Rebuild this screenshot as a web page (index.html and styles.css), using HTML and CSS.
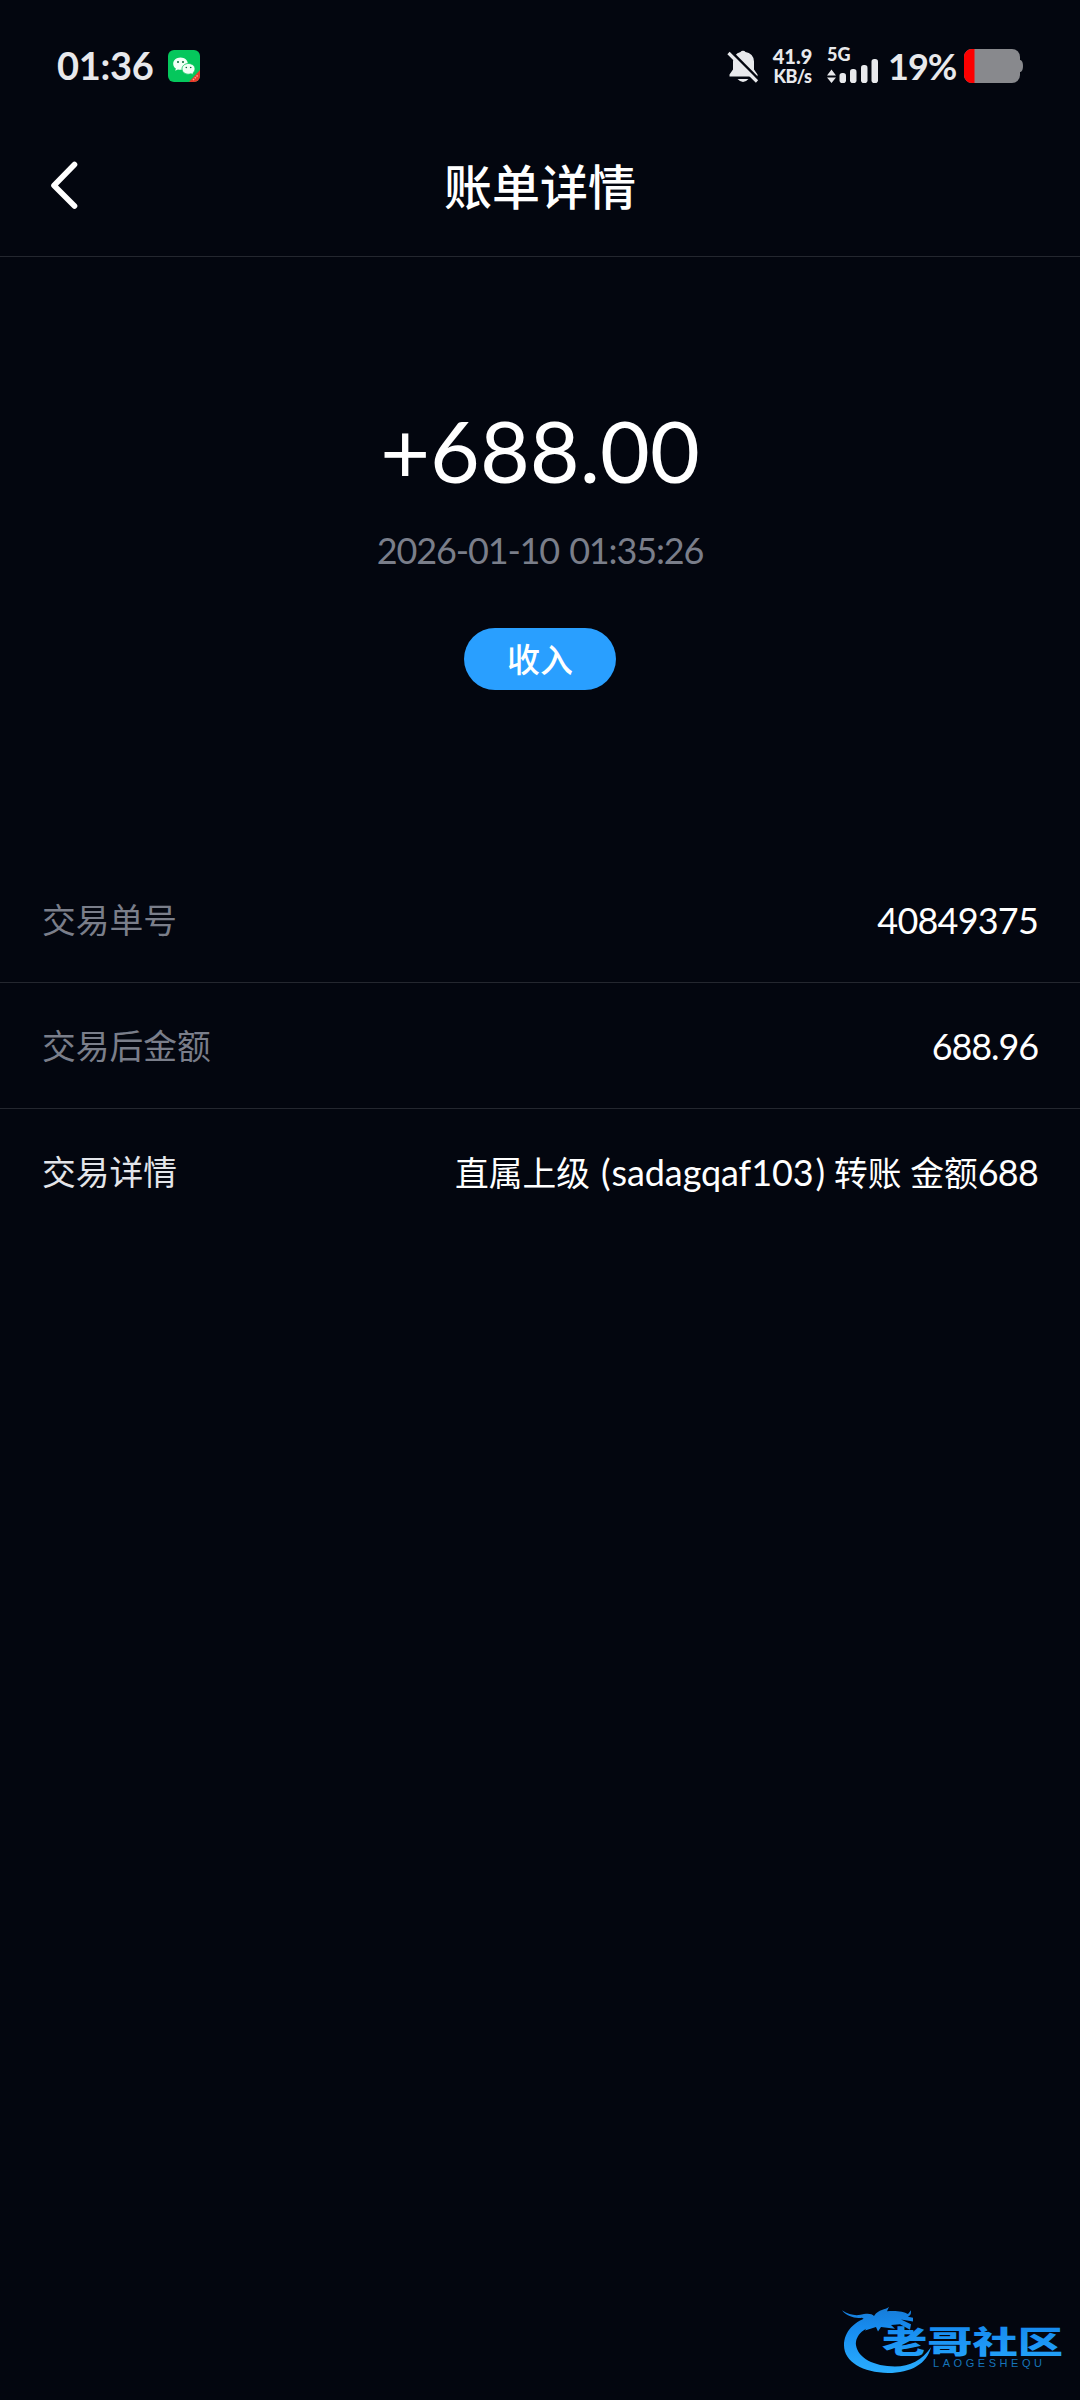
FILE: index.html
```html
<!DOCTYPE html>
<html lang="zh-CN">
<head>
<meta charset="utf-8">
<title>账单详情</title>
<link rel="stylesheet" href="styles.css">
</head>
<body>
<div class="status-bar">
  <span class="clock">01:36</span>
  <svg class="wechat" viewBox="0 0 32 32" width="32" height="32">
    <clipPath id="app"><rect width="32" height="32" rx="6"/></clipPath>
    <g clip-path="url(#app)">
      <rect width="32" height="32" fill="#05c75c"/>
      <path d="M32 20V32H21Z" fill="#e8392b"/>
      <path d="M25 30l5-5" stroke="#ff9c8c" stroke-width="1.5" stroke-dasharray="1.5 1"/>
    </g>
    <path d="M12.500 7.500c-4.200 0-7.300 2.800-7.300 6.200 0 2 1 3.700 2.700 4.900l-.7 2.200 2.700-1.300c.9.200 1.700.3 2.600.3 4.200 0 7.300-2.700 7.300-6.100s-3.100-6.200-7.300-6.200z" fill="#f2fff6"/>
    <path d="M20.500 13.500c3.700 0 6.500 2.400 6.500 5.400 0 1.600-.8 3-2.100 4l.5 2-2.300-1.100c-.8.200-1.700.4-2.600.4-3.700 0-6.500-2.300-6.500-5.300s2.800-5.400 6.500-5.400z" fill="#f2fff6" stroke="#05c75c" stroke-width=".8"/>
    <g fill="#076b38"><circle cx="10" cy="12" r="1"/><circle cx="15" cy="12" r="1"/><circle cx="18.300" cy="17.500" r=".8"/><circle cx="22.700" cy="17.500" r=".8"/></g>
  </svg>
  <div class="indicators">
    <svg class="bell" viewBox="0 0 32 36" width="32" height="36">
      <path d="M2.500 28.500V26.500L6 21.500v-8a9.500 9.500 0 0 1 7.500-9.500 3 3 0 0 1 5 0 9.500 9.500 0 0 1 8.500 9.500v8l3.500 5v2z" fill="#e8e9ec"/>
      <path d="M10.500 31h11q-5.500 6-11 0z" fill="#e8e9ec"/>
      <path d="M4 3.500L32.500 32" stroke="#03060f" stroke-width="2.600"/>
      <path d="M1.500 5L30 33.500" stroke="#e8e9ec" stroke-width="3.200"/>
    </svg>
    <div class="speed"><span class="rate">41.9</span><span class="unit">KB/s</span></div>
    <div class="cell">
      <span class="network">5G</span>
      <svg viewBox="0 0 52 24" width="52" height="24" fill="#e8e9ec">
        <path d="M4.500 10.500L9 16.500H0zM4.500 24L0 18.500H9z"/>
        <rect x="12.500" y="14" width="6.500" height="10" rx="2.800"/><rect x="23" y="10" width="6.500" height="14" rx="2.800"/><rect x="34" y="6" width="6.500" height="18" rx="2.800"/><rect x="44.500" y="0" width="6.500" height="24" rx="2.800"/>
      </svg>
    </div>
    <span class="percent">19%</span>
    <svg class="battery" viewBox="0 0 60 34" width="60" height="34">
      <clipPath id="cell"><rect width="56" height="34" rx="8"/></clipPath>
      <path d="M55 11h1.500q2.500 1 2.500 6t-2.500 6H55z" fill="#88898d"/>
      <g clip-path="url(#cell)"><rect width="56" height="34" fill="#88898d"/><rect width="10.500" height="34" fill="#fe0000"/></g>
    </svg>
  </div>
</div>
<header class="nav">
  <svg class="back" viewBox="0 0 28 48" width="28" height="48"><path d="M24.500 3.500L4 24.500L24.500 45" fill="none" stroke="#fff" stroke-width="5.600" stroke-linecap="round" stroke-linejoin="round"/></svg>
  <h1 class="title">账单详情</h1>
</header>
<main>
  <section class="summary">
    <div class="amount">+688.00</div>
    <div class="time">2026-01-10 01:35:26</div>
    <span class="tag">收入</span>
  </section>
  <dl class="details">
    <div class="row"><dt>交易单号</dt><dd class="order">40849375</dd></div>
    <div class="row"><dt>交易后金额</dt><dd class="balance">688.96</dd></div>
    <div class="row active"><dt>交易详情</dt><dd>直属上级<span class="paren open">(</span><span class="user">sadagqaf103</span><span class="paren close">)</span>转账 金额<span class="sum">688</span></dd></div>
  </dl>
</main>
<div class="watermark">
  <svg viewBox="0 0 230 80" width="230" height="80">
    <defs><linearGradient id="blue" x1="0" y1="0" x2="0" y2="80" gradientUnits="userSpaceOnUse"><stop offset="0" stop-color="#1678d2"/><stop offset=".35" stop-color="#178cf0"/><stop offset="1" stop-color="#2bb0ff"/></linearGradient></defs>
    <g fill="url(#blue)" transform="translate(0 3) scale(1 .92)">
      <path d="M32 14C14 19 4 31 4 46c0 18 19 30 44 30 23 0 39-10 43-28-9 14-21 21-36 21-21 0-37-9-39-23-1-11 8-20 25-24z"/>
      <path d="M2 8c8 6 16 6 22 4 5-1 8 0 10 2 5-8 11-6 15-10l-2 5c8-1 17 0 21 3l3-4c0 4 0 5-3 7l5 1v4l-12-2 10 5-1 6-10-6-9 1 4 4-14-2-3 5-2-5-11 4 3-6-6 1 4-6-4-3C15 17 7 15 2 8z"/>
    </g>
    <text class="brand" x="42" y="52.500" textLength="181" lengthAdjust="spacingAndGlyphs" fill="url(#blue)">老哥社区</text>
    <text class="brand-latin" x="93" y="67" textLength="109" fill="#1674b9">LAOGESHEQU</text>
  </svg>
</div>
</body>
</html>
```
FILE: styles.css
```css
* { box-sizing: border-box; }
body {
  margin: 0;
  width: 1080px;
  min-height: 2400px;
  position: relative;
  background: #03060f;
  color: #fff;
  font-family: Lato, "Noto Sans CJK SC", sans-serif;
}
.status-bar {
  height: 132px;
  padding: 0 56px 0 57px;
  display: flex;
  align-items: center;
  color: #e8e9ec;
}
.clock { font-size: 38px; font-weight: 700; letter-spacing: -0.3px; line-height: 48px; width: 96px; margin-bottom: 2px; white-space: nowrap; }
.wechat { margin-left: 15px; }
.indicators { margin-left: auto; display: flex; align-items: center; }
.speed { width: 41px; margin-left: 13px; display: flex; flex-direction: column; align-items: center; font-weight: 900; line-height: 20px; }
.rate { font-size: 20px; }
.unit { font-size: 18px; letter-spacing: -0.5px; }
.cell { margin-left: 14px; display: flex; flex-direction: column; height: 34px; width: 52px; }
.cell svg { margin-top: -3px; }
.network { font-size: 18px; font-weight: 900; line-height: 10px; height: 13px; }
.percent { margin-left: 9px; font-size: 36px; font-weight: 700; letter-spacing: -1px; line-height: 48px; width: 68px; white-space: nowrap; }
.battery { margin-left: 8px; }
.nav {
  height: 125px;
  border-bottom: 1px solid #24272f;
  padding: 0 50px;
  display: grid;
  grid-template-columns: 28px 1fr 28px;
  align-items: center;
}
.back { margin-bottom: 18px; }
.title { margin: 0 0 15px; text-align: center; font-size: 48px; font-weight: 500; line-height: 70px; }
.summary { height: 600px; padding-top: 139px; display: flex; flex-direction: column; align-items: center; }
.amount { font-size: 86px; line-height: 108px; }
.time { margin-top: 19px; font-size: 36px; letter-spacing: -1.150px; word-spacing: 2px; line-height: 54px; color: #7a7e8a; }
.tag {
  margin-top: 51px;
  width: 152px;
  height: 62px;
  border-radius: 31px;
  background: #299fff;
  text-align: center;
  font-size: 33px;
  font-weight: 500;
  line-height: 63px;
}
.details { margin: 0; }
.row {
  height: 126px;
  padding: 0 42px;
  display: flex;
  align-items: center;
  justify-content: space-between;
  border-bottom: 1px solid #24272f;
  font-size: 33.750px;
  line-height: 50px;
}
.row:last-child { border-bottom: 0; }
dt { color: #7a7e8a; }
.active dt { color: #e3e5ea; }
dd { margin: 0; white-space: nowrap; }
.order, .balance, .user, .sum { font-size: 36px; }
.order, .sum { letter-spacing: -0.800px; }
.balance { letter-spacing: -1.100px; }
.user { letter-spacing: -0.1px; }
.paren { display: inline-block; font-size: 36px; line-height: 40px; }
.open { padding: 0 1px 0 11px; }
.close { padding: 0 9px 0 2px; }
.watermark { position: absolute; left: 840px; top: 2300px; height: 80px; }
.brand { font-family: "Noto Sans CJK SC", sans-serif; font-weight: 900; font-size: 31px; }
.brand-latin { font-family: "Liberation Sans", sans-serif; font-size: 11px; }
```
